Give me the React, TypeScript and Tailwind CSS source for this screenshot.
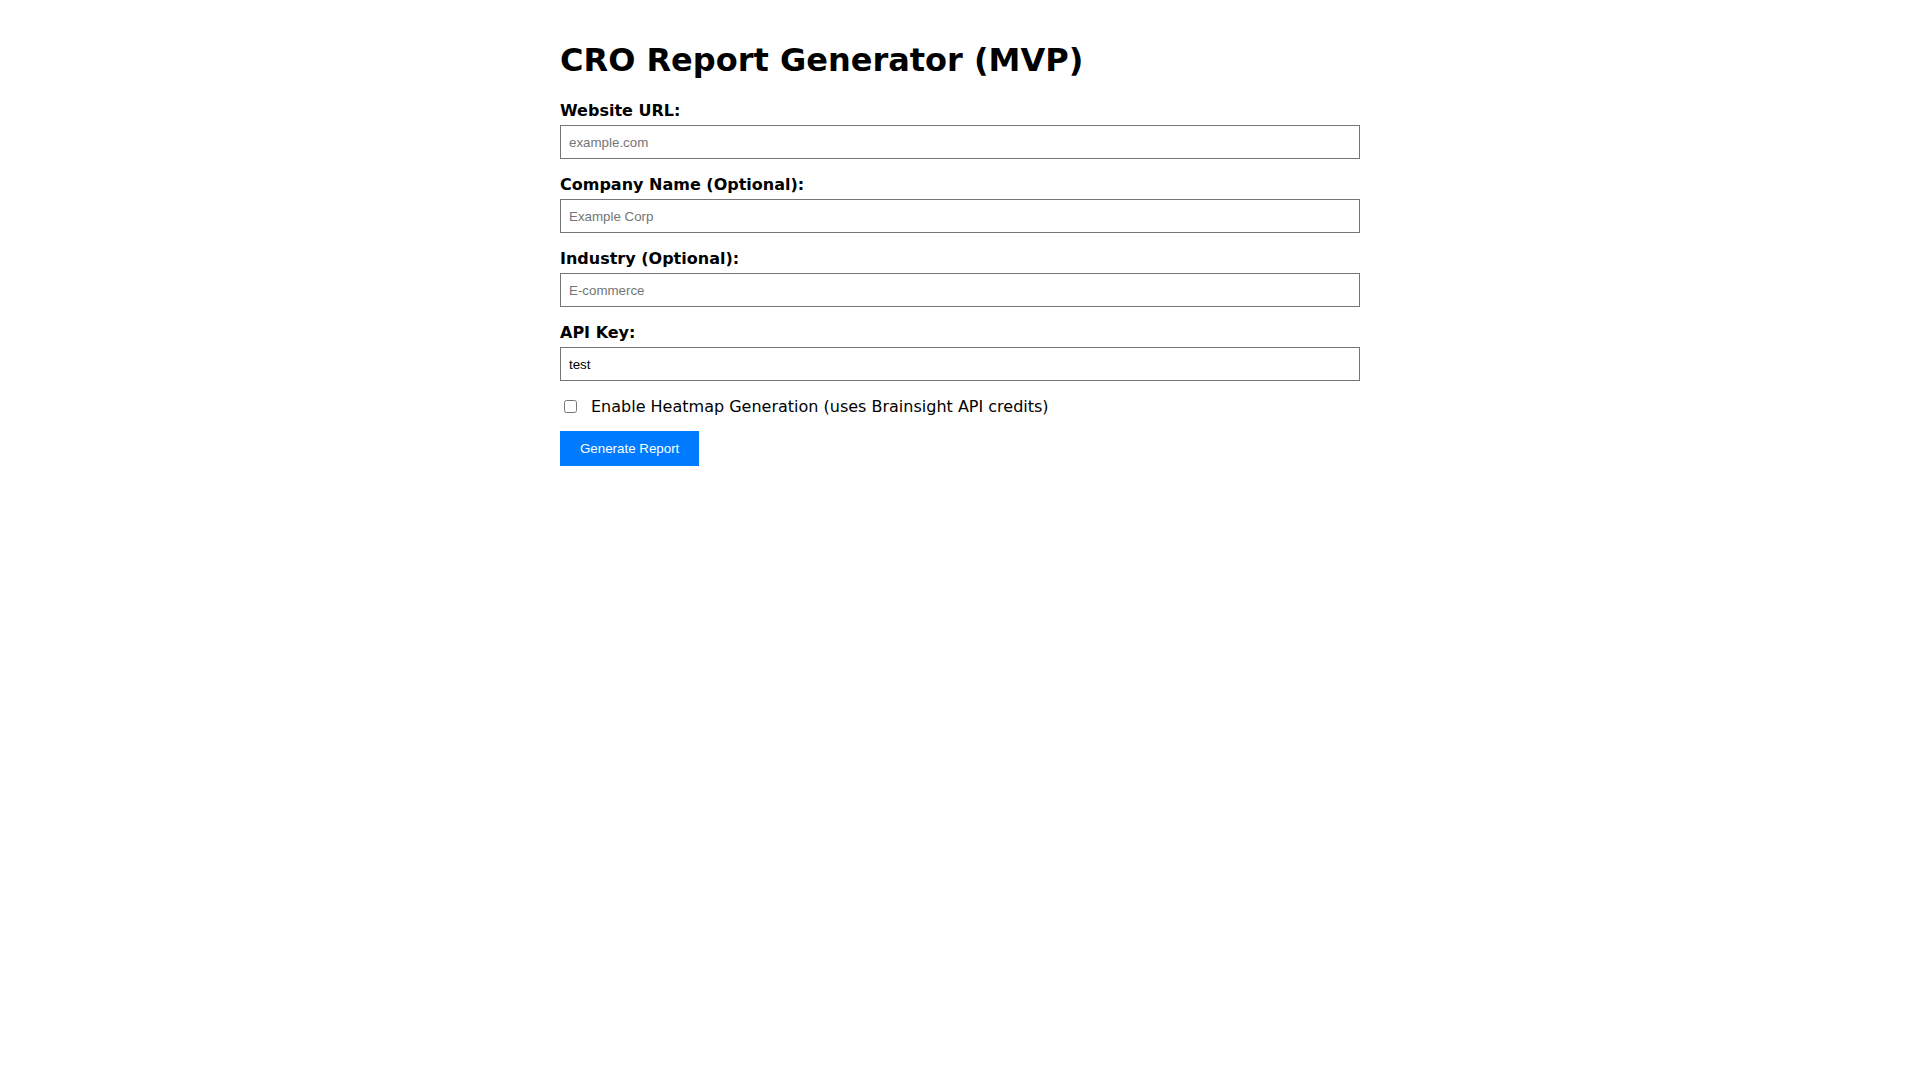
import { useState } from "react";

const fields = [
  { name: "url", label: "Website URL:", placeholder: "example.com", value: "" },
  { name: "company", label: "Company Name (Optional):", placeholder: "Example Corp", value: "" },
  { name: "industry", label: "Industry (Optional):", placeholder: "E-commerce", value: "" },
  { name: "apiKey", label: "API Key:", placeholder: "", value: "test" },
];

export default function App() {
  const [values, setValues] = useState<Record<string, string>>(
    Object.fromEntries(fields.map((f) => [f.name, f.value]))
  );
  const [heatmap, setHeatmap] = useState(false);

  return (
    <div className="min-h-screen bg-white text-black font-['DejaVu_Sans',sans-serif]">
      <div className="mx-auto w-[800px] pt-[42px]">
        <h1 className="text-[32px] leading-[37px] font-bold">CRO Report Generator (MVP)</h1>

        <form className="mt-[22px]" onSubmit={(e) => e.preventDefault()}>
          {fields.map((f) => (
            <div key={f.name} className="mb-[16px]">
              <label htmlFor={f.name} className="mb-[5px] block text-[16px] leading-[19px] font-bold">
                {f.label}
              </label>
              <input
                id={f.name}
                name={f.name}
                placeholder={f.placeholder}
                value={values[f.name]}
                onChange={(e) => setValues({ ...values, [f.name]: e.target.value })}
                className="block h-[34px] w-full border border-[#767676] bg-white px-2 text-[13.33px] text-black font-['Liberation_Sans',Arial,sans-serif] placeholder:text-[#757575] outline-none"
              />
            </div>
          ))}

          <label className="flex h-[19px] items-center text-[16px] leading-[19px]">
            <input
              type="checkbox"
              checked={heatmap}
              onChange={(e) => setHeatmap(e.target.checked)}
              className="ml-[4px] h-[13px] w-[13px]"
            />
            <span className="ml-[14px]">Enable Heatmap Generation (uses Brainsight API credits)</span>
          </label>

          <button
            type="submit"
            className="mt-[15px] h-[35px] bg-[#007bff] px-5 text-[13.33px] text-white font-['Liberation_Sans',Arial,sans-serif]"
          >
            Generate Report
          </button>
        </form>
      </div>
    </div>
  );
}
